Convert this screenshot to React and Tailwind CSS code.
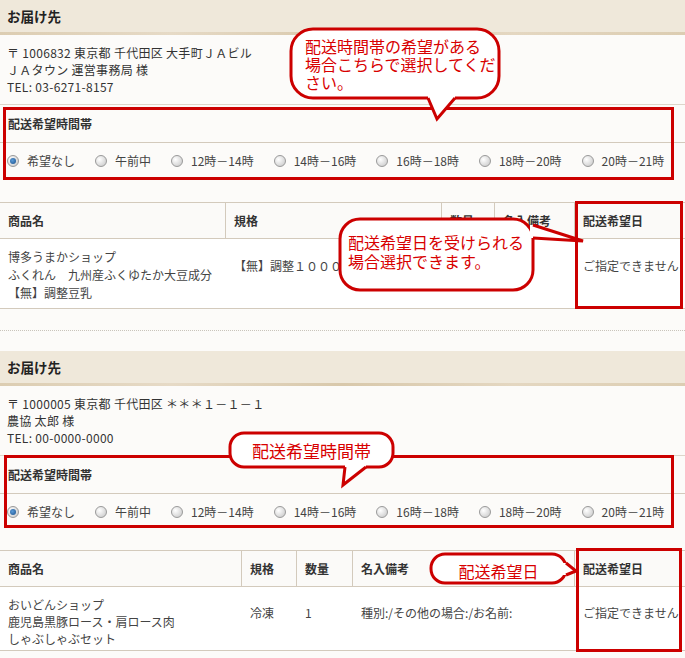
import React from "react";

const RED = "#cc0000";

function Radio({ checked }) {
  return (
    <span className="relative inline-block w-[12px] h-[12px] rounded-full border border-[#9a9a9a] bg-[radial-gradient(circle_at_35%_35%,#ffffff,#c4c4c4)] shrink-0">
      {checked && (
        <span className="absolute left-[2px] top-[2px] w-[6px] h-[6px] rounded-full bg-[radial-gradient(circle_at_40%_40%,#5a9bd8,#1a4f8a)]" />
      )}
    </span>
  );
}

const SLOTS = ["希望なし", "午前中", "12時－14時", "14時－16時", "16時－18時", "18時－20時", "20時－21時"];

function Header() {
  return (
    <div className="h-[35px] flex flex-col">
      <div className="h-[32px] bg-[#efe8da] flex items-center pl-[7px] text-[13.5px] font-bold text-[#222]">お届け先</div>
      <div className="h-[3px] bg-[linear-gradient(90deg,#dccdb2,#e6dac6,#d8c8ab,#e4d7c1,#dccdb2)]" />
    </div>
  );
}

function Address({ lines }) {
  return (
    <div className="py-[9px] pl-[7px] text-[12px] leading-[17px] text-[#333] border-b border-[#ddd6ca]">
      {lines.map((l, i) => (
        <div key={i} className="whitespace-pre tracking-[0.3px]">{l}</div>
      ))}
    </div>
  );
}

function TimeSlots() {
  return (
    <div>
      <div className="h-[38px] flex items-center pl-[8px] text-[12px] font-bold text-[#333] border-b border-[#d3cabc]">配送希望時間帯</div>
      <div className="h-[36px] flex items-center pl-[7px] text-[12px] text-[#444]">
        {SLOTS.map((s, i) => (
          <div key={s} className="flex items-center gap-[8px] mr-[20px]">
            <Radio checked={i === 0} />
            <span className="whitespace-nowrap">{s}</span>
          </div>
        ))}
      </div>
    </div>
  );
}

function Table({ widths, heads, cells, bodyClass, topClass }) {
  return (
    <div className={"border-t border-b border-[#d3cabc] bg-white " + topClass}>
      <div className="flex h-[36px] border-b border-[#d3cabc] bg-[#fbfaf8]">
        {heads.map((h, i) => (
          <div
            key={i}
            style={{ width: widths[i] }}
            className={"shrink-0 flex items-center px-[8px] text-[12px] font-bold text-[#333] whitespace-nowrap " + (i < heads.length - 1 ? "border-r border-[#d3cabc]" : "")}
          >
            {h}
          </div>
        ))}
      </div>
      <div className={"flex text-[12px] text-[#444] " + bodyClass}>
        {cells.map((c, i) => (
          <div
            key={i}
            style={{ width: widths[i] }}
            className={"shrink-0 flex items-center px-[8px] whitespace-nowrap overflow-hidden " + (i > 0 ? "pb-[18px]" : "")}
          >
            <div>{c}</div>
          </div>
        ))}
      </div>
    </div>
  );
}

function BubbleShape({ x, y, w, h, r, tail }) {
  const [a, tip, b, d] = tail;
  const ai = [a[0] + d[0], a[1] + d[1]];
  const bi = [b[0] + d[0], b[1] + d[1]];
  return (
    <g>
      <rect x={x} y={y} width={w} height={h} rx={r} ry={r} fill="#fff" stroke={RED} strokeWidth="3" />
      <polygon points={`${ai.join(",")} ${a.join(",")} ${tip.join(",")} ${b.join(",")} ${bi.join(",")}`} fill="#fff" />
      <polyline points={`${a.join(",")} ${tip.join(",")} ${b.join(",")}`} fill="none" stroke={RED} strokeWidth="3" strokeLinejoin="miter" />
    </g>
  );
}

export default function App() {
  return (
    <div className="relative w-[685px] h-[658px] overflow-hidden bg-[#fcfbf9] font-['Noto_Sans_CJK_JP','Noto_Sans',sans-serif]">
      {/* Section 1 */}
      <div>
        <Header />
        <Address lines={["〒 1006832 東京都 千代田区 大手町ＪＡビル", "ＪＡタウン 運営事務局 様", "TEL: 03-6271-8157"]} />
        <TimeSlots />
        <Table
          topClass="mt-[23px]"
          widths={[226, 216, 53, 80, 110]}
          heads={["商品名", "規格", "数量", "名入備考", "配送希望日"]}
          bodyClass="pt-[9px] pb-[6px] leading-[18px]"
          cells={[
            <>博多うまかショップ<br />ふくれん　九州産ふくゆたか大豆成分<br />【無】調整豆乳</>,
            "【無】調整１０００ｍｌ",
            "1",
            "",
            "ご指定できません",
          ]}
        />
        <div className="h-[21px]" />
        <div className="border-t border-dotted border-[#c9c4bb]" />
        <div className="h-[20px]" />
      </div>

      {/* Section 2 */}
      <div>
        <Header />
        <Address lines={["〒 1000005 東京都 千代田区 ＊＊＊１－１－１", "農協 太郎 様", "TEL: 00-0000-0000"]} />
        <TimeSlots />
        <Table
          topClass="mt-[20px]"
          widths={[242, 55, 56, 222, 110]}
          heads={["商品名", "規格", "数量", "名入備考", "配送希望日"]}
          bodyClass="pt-[9px] pb-[3px] leading-[17px]"
          cells={[
            <>おいどんショップ<br />鹿児島黒豚ロース・肩ロース肉<br />しゃぶしゃぶセット</>,
            "冷凍",
            "1",
            "種別:/その他の場合:/お名前:",
            "ご指定できません",
          ]}
        />
      </div>

      {/* Overlays: red highlight boxes */}
      <div className="absolute left-[3px] top-[107px] w-[671px] h-[73px] border-[3px] border-[#cc0000] pointer-events-none" />
      <div className="absolute left-[575px] top-[201px] w-[108px] h-[108px] border-[3px] border-[#cc0000] pointer-events-none" />
      <div className="absolute left-[4px] top-[455px] w-[670px] h-[73px] border-[3px] border-[#cc0000] pointer-events-none" />
      <div className="absolute left-[576px] top-[548px] w-[106px] h-[104px] border-[3px] border-[#cc0000] pointer-events-none" />

      {/* Callout shapes */}
      <svg className="absolute left-0 top-0 pointer-events-none" width="685" height="658">
        <BubbleShape x={291} y={29} w={208} h={69} r={22} tail={[[428, 98], [437, 119], [455, 98], [0, -3]]} />
        <BubbleShape x={340} y={219} w={193} h={71} r={20} tail={[[533, 225], [583, 241], [533, 238], [-3, 0]]} />
        <BubbleShape x={230} y={433} w={163} h={34} r={14} tail={[[345, 467], [343, 485], [366, 467], [0, -3]]} />
        <BubbleShape x={431} y={554} w={135} h={29} r={14} tail={[[566, 563], [576, 571], [566, 575], [-3, 0]]} />
      </svg>

      {/* Callout texts */}
      <div className="absolute left-[305px] top-[37px] text-[16px] leading-[18px] text-[#d80000] whitespace-nowrap">
        配送時間帯の希望がある<br />場合こちらで選択してくだ<br />さい。
      </div>
      <div className="absolute left-[348px] top-[233px] text-[16px] leading-[19px] text-[#d80000] whitespace-nowrap">
        配送希望日を受けられる<br />場合選択できます。
      </div>
      <div className="absolute left-[230px] top-[433px] w-[163px] h-[36px] flex items-center justify-center text-[17px] text-[#d80000] whitespace-nowrap">
        配送希望時間帯
      </div>
      <div className="absolute left-[431px] top-[555px] w-[135px] h-[32px] flex items-center justify-center text-[16px] text-[#d80000] whitespace-nowrap">
        配送希望日
      </div>
    </div>
  );
}
